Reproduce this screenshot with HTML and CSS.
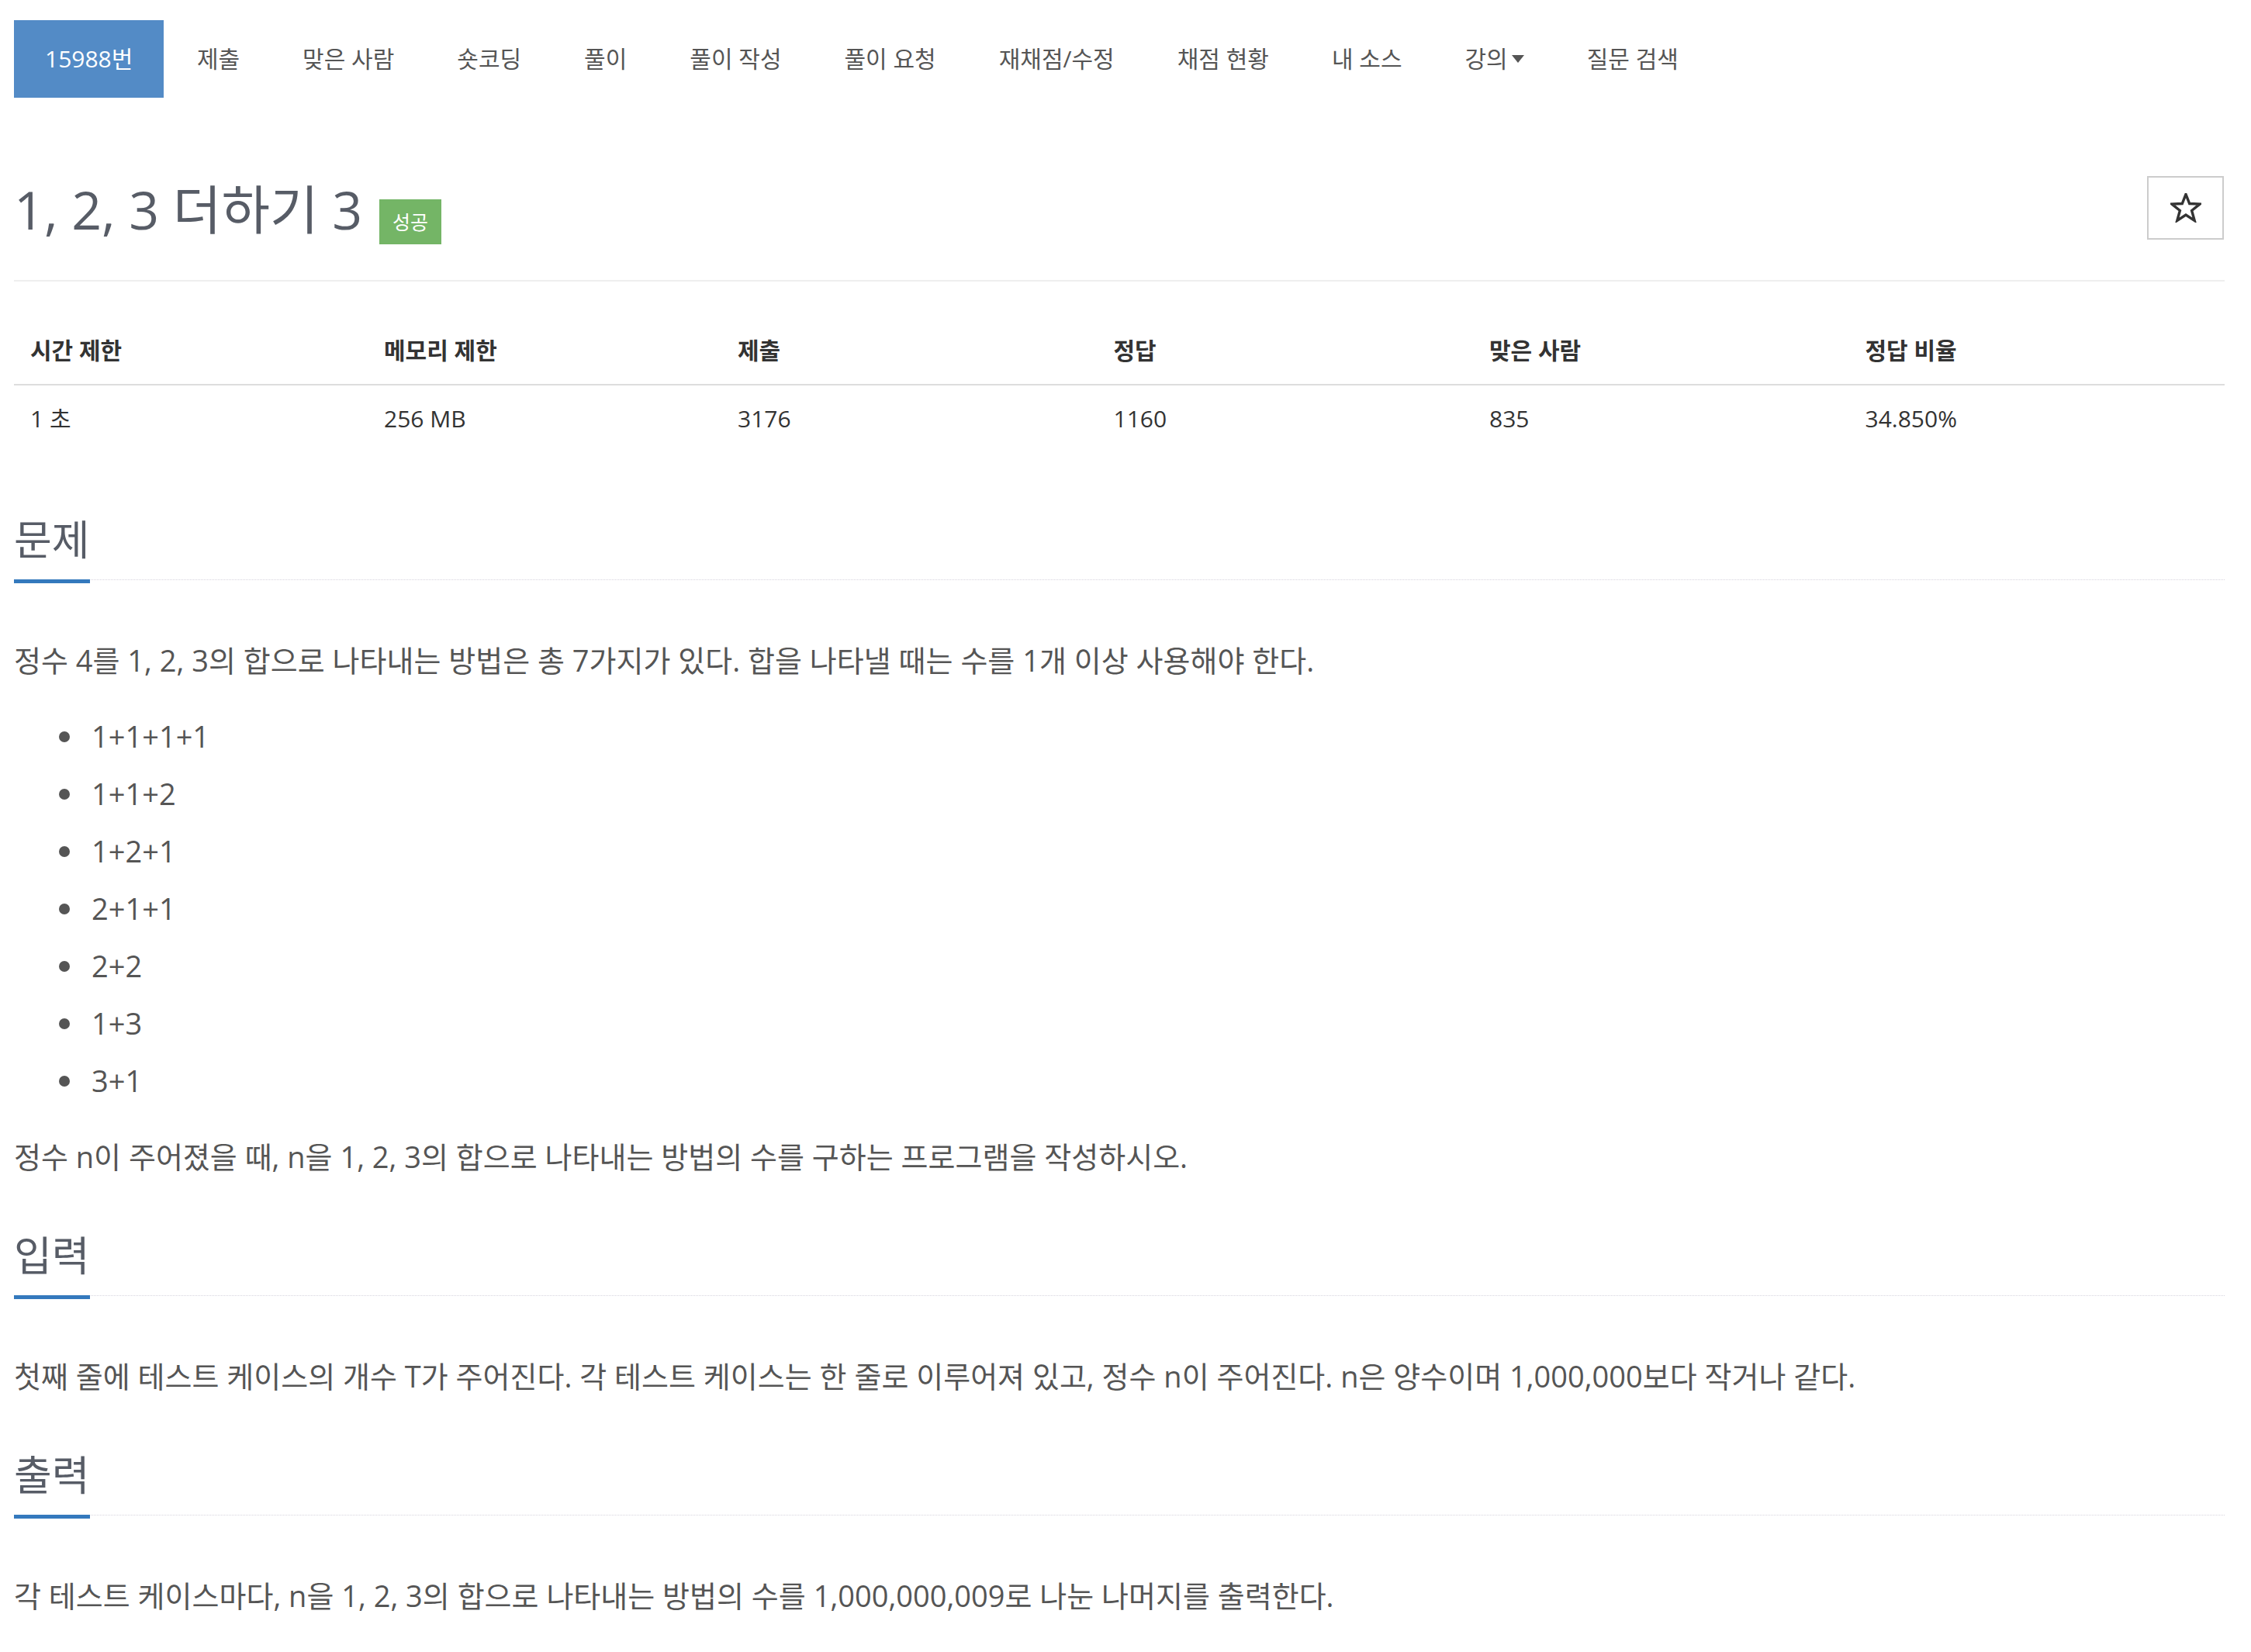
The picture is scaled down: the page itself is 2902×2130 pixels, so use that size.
FILE: index.html
```html
<!DOCTYPE html>
<html lang="ko">
<head>
<meta charset="utf-8">
<title>1, 2, 3 더하기 3</title>
<link rel="stylesheet" href="styles.css">
</head>
<body>
<div class="page">
  <ul class="nav">
    <li class="active"><a>15988번</a></li>
    <li><a>제출</a></li>
    <li><a>맞은 사람</a></li>
    <li><a>숏코딩</a></li>
    <li><a>풀이</a></li>
    <li><a>풀이 작성</a></li>
    <li><a>풀이 요청</a></li>
    <li><a>재채점/수정</a></li>
    <li><a>채점 현황</a></li>
    <li><a>내 소스</a></li>
    <li><a>강의<span class="caret"></span></a></li>
    <li><a>질문 검색</a></li>
  </ul>

  <div class="title-row">
    <h1 class="title"><span class="title-text">1, 2, 3 더하기 3</span><span class="badge">성공</span></h1>
    <button class="star-btn" type="button" aria-label="즐겨찾기">
      <svg width="40" height="38" viewBox="0 0 40 38"><polygon points="20,1.5 24.7,13.5 38,14.1 27.6,22.5 31.2,35.4 20,28 8.8,35.4 12.4,22.5 2,14.1 15.3,13.5" fill="none" stroke="#333" stroke-width="3.4" stroke-linejoin="miter"/></svg>
    </button>
  </div>

  <table class="info">
    <thead>
      <tr>
        <th class="w16">시간 제한</th>
        <th class="w16">메모리 제한</th>
        <th class="w17">제출</th>
        <th class="w17">정답</th>
        <th class="w17">맞은 사람</th>
        <th class="w17">정답 비율</th>
      </tr>
    </thead>
    <tbody>
      <tr>
        <td>1 초</td>
        <td>256 MB</td>
        <td>3176</td>
        <td>1160</td>
        <td>835</td>
        <td>34.850%</td>
      </tr>
    </tbody>
  </table>

  <section class="sec first">
    <div class="headline"><h2>문제</h2></div>
    <div class="text">
      <p>정수 4를 1, 2, 3의 합으로 나타내는 방법은 총 7가지가 있다. 합을 나타낼 때는 수를 1개 이상 사용해야 한다.</p>
      <ul>
        <li>1+1+1+1</li>
        <li>1+1+2</li>
        <li>1+2+1</li>
        <li>2+1+1</li>
        <li>2+2</li>
        <li>1+3</li>
        <li>3+1</li>
      </ul>
      <p>정수 n이 주어졌을 때, n을 1, 2, 3의 합으로 나타내는 방법의 수를 구하는 프로그램을 작성하시오.</p>
    </div>
  </section>

  <section class="sec">
    <div class="headline"><h2>입력</h2></div>
    <div class="text">
      <p>첫째 줄에 테스트 케이스의 개수 T가 주어진다. 각 테스트 케이스는 한 줄로 이루어져 있고, 정수 n이 주어진다. n은 양수이며 1,000,000보다 작거나 같다.</p>
    </div>
  </section>

  <section class="sec">
    <div class="headline"><h2>출력</h2></div>
    <div class="text">
      <p>각 테스트 케이스마다, n을 1, 2, 3의 합으로 나타내는 방법의 수를 1,000,000,009로 나눈 나머지를 출력한다.</p>
    </div>
  </section>
</div>
</body>
</html>
```

FILE: styles.css
```css
html, body {
  margin: 0;
  padding: 0;
  background: #fff;
}

body {
  font-family: "Open Sans", "Noto Sans CJK KR", sans-serif;
  color: #555;
}

.page {
  padding: 26px 34px 40px 18px;
}

/* nav pills */
.nav {
  list-style: none;
  margin: 0;
  padding: 0;
  display: flex;
  height: 100px;
}

.nav li + li {
  margin-left: 4px;
}

.nav a {
  display: flex;
  align-items: center;
  box-sizing: border-box;
  height: 100px;
  padding: 0 38.5px 5px;
  font-size: 30px;
  color: #555;
  white-space: nowrap;
}

.nav li.active a {
  background: #538bc6;
  color: #fff;
  padding-left: 40px;
  padding-right: 40px;
}

.caret {
  display: inline-block;
  width: 0;
  height: 0;
  margin-left: 5px;
  margin-top: 4px;
  border-top: 10px solid #555;
  border-left: 8px solid transparent;
  border-right: 8px solid transparent;
}

/* title */
.title-row {
  margin-top: 101px;
  display: flex;
  justify-content: space-between;
  align-items: flex-start;
  padding-bottom: 46px;
  border-bottom: 2px solid #eee;
}

.title {
  margin: 2px 0 0;
  display: flex;
  align-items: baseline;
  font-weight: 400;
  color: #575c66;
}

.title-text {
  font-size: 68px;
  line-height: 82px;
}

.badge {
  margin-left: 22px;
  display: inline-block;
  background: #74b566;
  color: #fff;
  font-size: 25px;
  line-height: 25px;
  padding: 17px 17px 16px;
}

.star-btn {
  width: 99px;
  height: 82px;
  margin: 0 1px 0 0;
  padding: 0;
  border: 2px solid #ccc;
  background: #fff;
  display: flex;
  align-items: center;
  justify-content: center;
}

.star-btn svg {
  display: block;
}

/* info table */
.info {
  margin-top: 46px;
  width: 100%;
  border-collapse: collapse;
  font-size: 30px;
  color: #333;
}

.info th,
.info td {
  text-align: left;
  padding: 20px 21px;
  line-height: 46px;
}

.info th {
  font-weight: 700;
  border-bottom: 2px solid #ddd;
}

.w16 { width: 16%; }
.w17 { width: 17%; }

/* sections */
.sec {
  margin-top: 71px;
}

.sec.first {
  margin-top: 86px;
}

.headline {
  display: flex;
  border-bottom: 1px dotted #d6d4de;
}

.headline h2 {
  margin: 0 0 -5px;
  padding-bottom: 24px;
  font-size: 53px;
  line-height: 54px;
  font-weight: 400;
  color: #575c66;
  border-bottom: 5px solid #3479bd;
}

.text {
  margin-top: 73px;
  font-size: 38px;
  line-height: 60px;
  color: #555;
}

.text p {
  margin: 0 0 38px;
}

.text ul {
  list-style: none;
  margin: 0 0 38px;
  padding-left: 100px;
}

.text li {
  position: relative;
}

.text li::before {
  content: "";
  position: absolute;
  left: -42px;
  top: 24px;
  width: 14px;
  height: 14px;
  border-radius: 50%;
  background: #555;
}

.text li + li {
  margin-top: 14px;
}

.text > :last-child {
  margin-bottom: 0;
}
```
